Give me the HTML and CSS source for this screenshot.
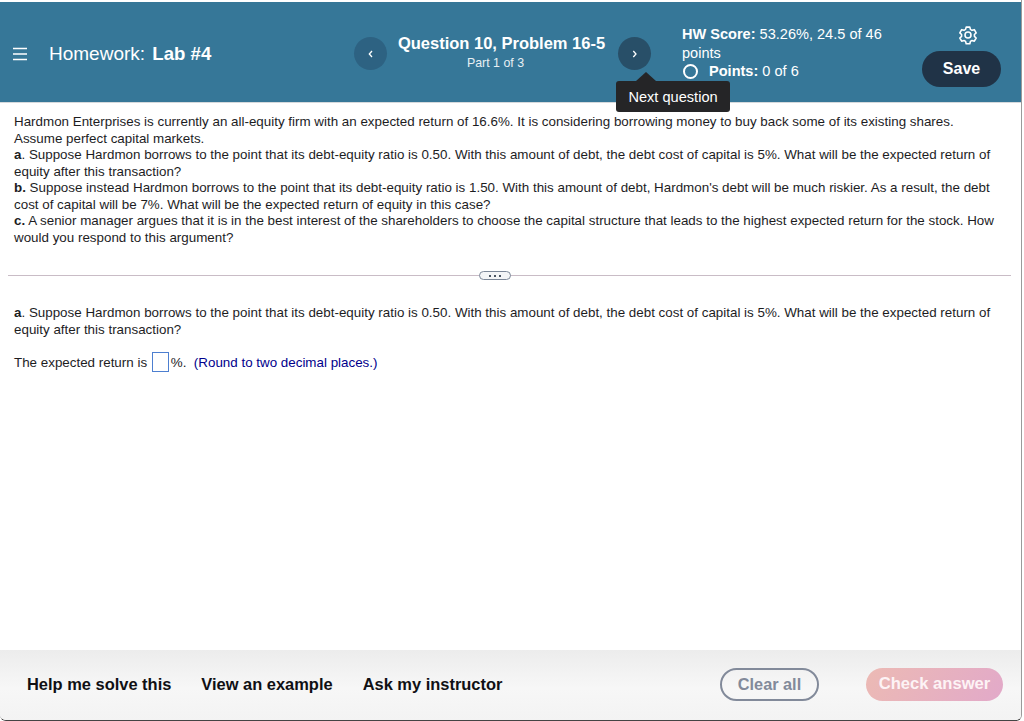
FILE: index.html
```html
<!DOCTYPE html>
<html lang="en">
<head>
<meta charset="utf-8">
<title>Homework: Lab #4</title>
<link rel="stylesheet" href="styles.css">
</head>
<body>
<div class="window">
  <header class="topbar">
    <div class="brand">
      <svg class="menu-icon" width="16" height="14" viewBox="0 0 16 14"><path d="M1 1.5h14M1 7h14M1 12.5h14" stroke="#fff" stroke-width="1.3" fill="none"/></svg>
      <span class="brand-text">Homework: <b class="brand-name">Lab #4</b></span>
    </div>
    <div class="nav">
      <button class="round"><svg width="8" height="10" viewBox="0 0 8 10"><path d="M5 2 L2.3 5 L5 8" stroke="#fff" stroke-width="1.3" fill="none"/></svg></button>
      <div class="q-title">
        <div class="q-main">Question 10, Problem 16-5</div>
        <div class="q-sub">Part 1 of 3</div>
      </div>
      <button class="round round-active"><svg width="8" height="10" viewBox="0 0 8 10"><path d="M2.3 2 L5 5 L2.3 8" stroke="#fff" stroke-width="1.3" fill="none"/></svg></button>
      <div class="tooltip">Next question</div>
    </div>
    <div class="score">
      <div><b>HW Score:</b> 53.26%, 24.5 of 46 points</div>
      <div class="points"><span class="ring"></span><span><b>Points:</b> 0 of 6</span></div>
    </div>
    <div class="actions">
      <svg class="gear" width="20" height="20" viewBox="0 0 24 24" fill="none" stroke="#fff" stroke-width="1.9" stroke-linejoin="round"><circle cx="12" cy="12" r="3.6"/><path d="M9.8 2.5h4.4l.7 2.8 1.9 1.1 2.8-.8 2.2 3.8-2.1 2v2.2l2.1 2-2.2 3.8-2.8-.8-1.9 1.1-.7 2.8H9.8l-.7-2.8-1.9-1.1-2.8.8-2.2-3.8 2.1-2v-2.2l-2.1-2 2.2-3.8 2.8.8 1.9-1.1z"/></svg>
      <button class="save">Save</button>
    </div>
  </header>

  <main class="content">
    <section class="question">
      <p>Hardmon Enterprises is currently an all-equity firm with an expected return of 16.6%. It is considering borrowing money to buy back some of its existing shares.<br>Assume perfect capital markets.</p>
      <p><b>a</b>. Suppose Hardmon borrows to the point that its debt-equity ratio is 0.50. With this amount of debt, the debt cost of capital is 5%. What will be the expected return of equity after this transaction?</p>
      <p><b>b.</b> Suppose instead Hardmon borrows to the point that its debt-equity ratio is 1.50. With this amount of debt, Hardmon's debt will be much riskier. As a result, the debt cost of capital will be 7%. What will be the expected return of equity in this case?</p>
      <p><b>c.</b> A senior manager argues that it is in the best interest of the shareholders to choose the capital structure that leads to the highest expected return for the stock. How would you respond to this argument?</p>
    </section>
    <div class="divider"><span class="pill"><i></i><i></i><i></i></span></div>
    <section class="answer">
      <p><b>a</b>. Suppose Hardmon borrows to the point that its debt-equity ratio is 0.50. With this amount of debt, the debt cost of capital is 5%. What will be the expected return of equity after this transaction?</p>
      <p class="response">The expected return is <span class="input"></span>%.&nbsp; <span class="hint">(Round to two decimal places.)</span></p>
    </section>
  </main>

  <footer class="footer">
    <nav class="help">
      <a>Help me solve this</a>
      <a>View an example</a>
      <a>Ask my instructor</a>
    </nav>
    <div class="footer-actions">
      <button class="clear">Clear all</button>
      <button class="check">Check answer</button>
    </div>
  </footer>
</div>
</body>
</html>
```
FILE: styles.css
```css
* { box-sizing: border-box; }
html, body { margin: 0; height: 721px; overflow: hidden; background: #fff; }
body { font-family: "Liberation Sans", Arial, sans-serif; color: #1d1d1f; }
button { font-family: inherit; border: 0; padding: 0; }
.window {
  width: 1022px; height: 721px; padding-top: 2px;
  display: flex; flex-direction: column;
  border-right: 1px solid #9a9a9a;
  border-bottom: 1px solid #444;
  border-bottom-left-radius: 6px; border-bottom-right-radius: 6px;
  overflow: hidden;
}
.topbar {
  height: 101px; flex: none; background: #367798; color: #fff;
  display: flex; align-items: center; position: relative;
  padding-top: 3px;
  border-bottom: 1px solid #d5d9dc;
}
.brand { width: 354px; padding-left: 12px; display: flex; align-items: center; gap: 21px; flex: none; }
.menu-icon { flex: none; }
.brand-text { font-size: 19px; }
.brand-name { font-size: 18.6px; margin-left: 2px; }
.nav { width: 328px; height: 33px; flex: none; display: flex; align-items: center; position: relative; }
.round {
  width: 33px; height: 33px; border-radius: 50%; background: #2d6282;
  display: flex; align-items: center; justify-content: center; flex: none;
}
.round-active { background: #284f68; }
.q-title { width: 231px; text-align: center; flex: none; padding-bottom: 4px; }
.q-main { font-size: 16.5px; font-weight: 700; line-height: 23px; margin-left: -2px; }
.q-sub { font-size: 12.4px; line-height: 16px; margin-left: -14px; color: #e8f0f4; }
.tooltip {
  position: absolute; left: 262px; top: 44px;
  width: 114px; height: 31px; background: #252527; color: #fff;
  border-radius: 3px; font-size: 14.6px; line-height: 32px; text-align: center;
  z-index: 2;
}
.tooltip::before {
  content: ""; position: absolute; left: 20px; top: -9px;
  border-left: 10px solid transparent; border-right: 10px solid transparent;
  border-bottom: 9px solid #252527;
}
.score { width: 238px; flex: none; font-size: 14.55px; line-height: 18.5px; padding-bottom: 1px; }
.points { display: flex; align-items: center; gap: 11px; margin-left: 1px; }
.ring { width: 15px; height: 15px; border: 2px solid #fff; border-radius: 50%; flex: none; }
.actions { flex: 1; display: flex; flex-direction: column; align-items: center; gap: 6px; padding-top: 4px; margin-right: 20px; margin-left: 2px; }
.gear { flex: none; position: relative; left: 6px; }
.save {
  width: 79px; height: 36px; border-radius: 18px; background: #203347; color: #fff;
  font-size: 16px; font-weight: 700; padding-top: 1px;
}
.content { flex: 1; min-height: 0; background: #fff; font-size: 13.38px; line-height: 16.55px; }
.content p { margin: 0; }
.question { padding: 11px 24px 0 14px; height: 172px; }
.divider { margin: 0 10px 0 8px; height: 1px; background: #c9bcc6; position: relative; display: flex; justify-content: center; }
.pill {
  width: 32px; height: 9px; margin-top: -4px; background: #f4f5f7;
  border: 1.5px solid #7c8798; border-radius: 5px;
  display: flex; align-items: center; justify-content: center; gap: 3px;
  position: relative; left: -15px;
}
.pill i { width: 2px; height: 2px; background: #4b5563; }
.answer { padding: 29px 24px 0 14px; }
.response { margin-top: 16px !important; }
.input {
  display: inline-block; width: 17px; height: 20px; border: 1px solid #4d7fd0;
  vertical-align: middle; margin: -2px 2px 0 1px;
}
.hint { color: #00008c; }
.footer {
  flex: none; height: 70px;
  background: linear-gradient(180deg, #ececec 0%, #f7f7f7 55%, #f3f3f3 100%);
  display: flex; align-items: center; justify-content: space-between;
  padding: 0 18px 2px 27px;
}
.help { display: flex; gap: 30px; }
.help a { font-size: 16.45px; font-weight: 700; color: #101014; }
.footer-actions { display: flex; gap: 47px; }
.clear {
  width: 99px; height: 33px; border-radius: 17px; background: transparent;
  border: 2px solid #828a9a; color: #828a9a; font-size: 16.3px; font-weight: 700;
}
.check {
  width: 137px; height: 33px; border-radius: 17px;
  background: linear-gradient(120deg, #ecbab4, #e2a9c9);
  color: #fdf3f5; font-size: 16.6px; font-weight: 700;
}
```
